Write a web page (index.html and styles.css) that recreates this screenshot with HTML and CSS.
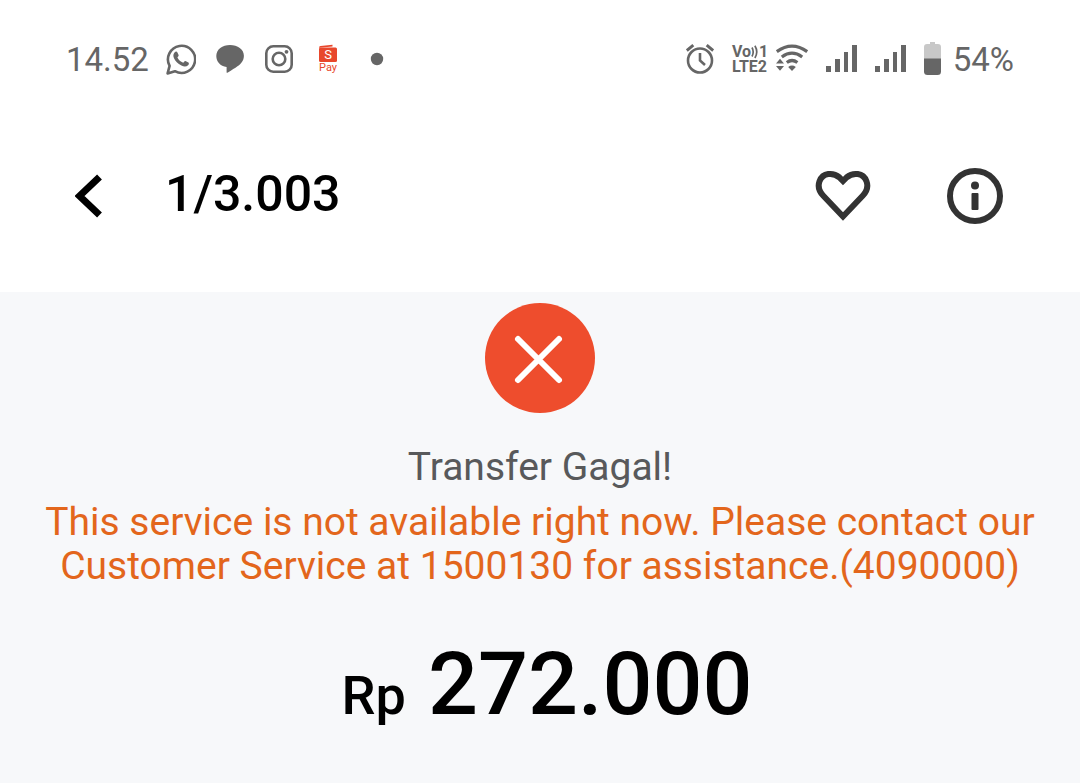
FILE: index.html
```html
<!DOCTYPE html>
<html lang="id">

<head>
    <meta charset="UTF-8">
    <meta name="viewport" content="width=device-width, initial-scale=1.0">
    <title>Transfer Gagal!</title>
    <link rel="stylesheet" href="styles.css">
</head>

<body>
    <div class="status-bar">
        <div class="status-left">
            <span class="time">14.52</span>
            <!-- WhatsApp -->
            <svg width="30" height="32" viewBox="0 0 30 32">
                <path d="M1.6 30.4L3.6 22.8A13.6 13.6 0 1 1 8.9 28.2Z" fill="none" stroke="#666" stroke-width="2.6" stroke-linejoin="round" />
                <path d="M8.7 9.2C9.6 8.2 10.8 8.2 11.3 9.2L12.6 12.1C12.9 12.9 12.1 13.8 11.4 14.5C12.7 17 14.5 18.7 17.2 19.8C18.1 18.8 18.8 17.7 19.5 18L22.4 19.4C23.3 20 22.8 21.5 22.1 22.2C20.4 23.8 18 23.8 15.4 22.6C11.8 21 9.2 18.2 7.9 15.1C6.9 12.6 7.4 10.6 8.7 9.2Z" fill="#666" />
            </svg>
            <!-- Chat -->
            <svg width="30" height="32" viewBox="0 0 30 32">
                <path d="M15 2C22.6 2 28.9 6.2 28.9 12.8C28.9 18.6 25 21.8 20.5 24.8C17.5 26.6 14.5 28.6 12.4 29.7C11.9 29.9 11.6 29.7 11.6 29.2V24C5.3 23.2 1.3 18.7 1.3 13C1.3 6.4 7.4 2 15 2Z" fill="#666" />
            </svg>
            <!-- Instagram -->
            <svg width="30" height="32" viewBox="0 0 30 32">
                <rect x="2.3" y="3.3" width="25.4" height="25.4" rx="7" fill="none" stroke="#666" stroke-width="2.6" />
                <circle cx="15" cy="16" r="6.3" fill="none" stroke="#666" stroke-width="2.6" />
                <circle cx="22.5" cy="8.8" r="1.9" fill="#666" />
            </svg>
            <!-- ShopeePay -->
            <svg width="30" height="32" viewBox="0 0 30 32">
                <path d="M6 4.6Q6 3.2 7.5 3L19.5 1.8V3.6L6 4.8Z" fill="#e8472c" />
                <rect x="6" y="4.6" width="18" height="14.4" rx="1.5" fill="#e8472c" />
                <text class="pay-s" x="15" y="16" text-anchor="middle">S</text>
                <text class="pay-text" x="15" y="28" text-anchor="middle">Pay</text>
            </svg>
            <svg width="30" height="32" viewBox="0 0 30 32">
                <circle cx="15" cy="16" r="6.2" fill="#666" />
            </svg>
        </div>

        <div class="status-right">
            <!-- Alarm -->
            <svg width="28" height="32" viewBox="1 0 28 32">
                <g fill="none" stroke="#666" stroke-width="2.6">
                    <circle cx="15" cy="17.5" r="12" />
                    <path d="M15 10V17.5L20 22" />
                    <path d="M1.8 7.5L8.3 2.2M28.2 7.5L21.7 2.2" stroke-width="3" />
                </g>
            </svg>
            <div class="network">
                <!-- VoLTE -->
                <svg width="38" height="32" viewBox="0 0 38 32">
                    <text class="volte" x="1" y="14">Vo</text>
                    <path d="M21 4.500Q23.400 9 21 13.500M23.900 2.800Q27.600 9 23.900 15" fill="none" stroke="#666" stroke-width="1.700" />
                    <text class="volte" x="28" y="14">1</text>
                    <text class="volte" x="1" y="29">LTE2</text>
                </svg>
                <!-- Wi-Fi -->
                <svg width="34" height="32" viewBox="0 0 34 32">
                    <g fill="none" stroke="#666" stroke-width="3.2">
                        <path d="M1.8 8.6Q17 -2.4 32.2 8.6" />
                        <path d="M6.8 14Q17 6.3 27.2 14" />
                        <path d="M11.8 19.5Q17 15.5 22.4 19.5" />
                    </g>
                    <path d="M13.2 24Q17 21.2 20.800 24L17 28Z" fill="#666" />
                    <path d="M1 20.500L5 15.800L9 20.500ZM1 23L5 27.700L9 23Z" fill="#666" />
                </svg>
            </div>
            <svg width="32" height="32" viewBox="0 0 32 32">
                <path d="M0 23H5V29H0ZM9 16H14V29H9ZM18 9H22V29H18ZM26 2H31V29H26Z" fill="#666" />
            </svg>
            <svg width="32" height="32" viewBox="0 0 32 32">
                <path d="M0 23H5V29H0ZM9 16H14V29H9ZM18 9H22V29H18ZM26 2H31V29H26Z" fill="#666" />
            </svg>
            <div class="battery">
                <svg width="17" height="34" viewBox="0 0 17 34">
                    <path d="M0 17V5Q0 2 3 2H6V0H11V2H14Q17 2 17 5V17Z" fill="#c8c8c8" />
                    <path d="M0 16.5H17V29.5Q17 33 13.5 33H3.5Q0 33 0 29.5Z" fill="#666" />
                </svg>
                <span>54%</span>
            </div>
        </div>
    </div>

    <header class="header">
        <button type="button" class="icon-button" aria-label="Kembali">
            <svg width="28" height="44" viewBox="0 0 28 44">
                <path d="M24.500 3L4.500 22L24.500 41" fill="none" stroke="#000" stroke-width="7" />
            </svg>
        </button>
        <h1>1/3.003</h1>
        <div class="actions">
            <button type="button" class="icon-button" aria-label="Favorit">
                <svg width="56" height="56" viewBox="0 0 56 56">
                    <path d="M28 48.5L8.3 27.8C4.3 23.6 2.7 18.2 4.5 13.2C7.8 4.6 18 4 24.4 9.400L28 13L31.600 9.400C38 4 48.2 4.6 51.5 13.2C53.3 18.2 51.7 23.6 47.7 27.8Z" fill="none" stroke="#333" stroke-width="6" />
                </svg>
            </button>
            <button type="button" class="icon-button" aria-label="Info">
                <svg width="56" height="56" viewBox="0 0 56 56">
                    <circle cx="28" cy="28" r="25" fill="none" stroke="#333" stroke-width="6" />
                    <circle cx="28" cy="17.5" r="4" fill="#333" />
                    <rect x="24.5" y="25" width="7" height="17" rx="1" fill="#333" />
                </svg>
            </button>
        </div>
    </header>

    <main class="result">
        <svg width="110" height="110" viewBox="0 0 110 110">
            <circle cx="55" cy="55" r="55" fill="#ee4d2d" />
            <path d="M33 36L74 77M74 36L33 77" fill="none" stroke="#fff" stroke-width="6" stroke-linecap="round" />
        </svg>
        <h2>Transfer Gagal!</h2>
        <p class="message">This service is not available right now. Please contact our Customer Service at 1500130 for assistance.(4090000)</p>
        <p class="amount"><span class="currency">Rp</span><span>272.000</span></p>
    </main>
</body>

</html>
```
FILE: styles.css
```css
body {
    font-family: Roboto, sans-serif;
    background-color: #f7f8fa;
    color: #000;
    margin: 0;
}

svg {
    display: block;
    flex-shrink: 0;
}

.status-bar {
    display: flex;
    justify-content: space-between;
    align-items: center;
    height: 82px;
    padding: 18px 66px 0;
    background: #fff;
    color: #666;
    font-size: 33px;
}

.status-left {
    display: flex;
    align-items: center;
    gap: 19px;
}

.time {
    margin-right: -2px;
}

.status-right {
    display: flex;
    align-items: center;
    gap: 17px;
}

.network {
    display: flex;
    gap: 6px;
}

.battery {
    display: flex;
    align-items: center;
    gap: 12px;
}

.volte {
    font-size: 16px;
    font-weight: 700;
    fill: #666;
}

.pay-s {
    font-size: 13px;
    fill: #fff;
}

.pay-text {
    font-size: 11px;
    fill: #e8472c;
}

.header {
    display: flex;
    align-items: center;
    height: 192px;
    padding: 0 77px 0 75px;
    background: #fff;
}

.header h1 {
    margin: 0 0 4px 62px;
    font-size: 50px;
    font-weight: 500;
}

.icon-button {
    padding: 0;
    border: none;
    background: none;
    cursor: pointer;
}

.actions {
    display: flex;
    gap: 76px;
    margin-left: auto;
}

.result {
    display: flex;
    flex-direction: column;
    align-items: center;
    padding: 11px 40px 40px;
    text-align: center;
}

.result h2 {
    margin: 32px 0 11px;
    color: #58595b;
    font-size: 39px;
    font-weight: 400;
    line-height: 44px;
}

.message {
    margin: 0;
    color: #e3661c;
    font-size: 39px;
    line-height: 44px;
}

.amount {
    display: flex;
    align-items: baseline;
    gap: 22px;
    margin: 44px 0 0;
    padding-left: 14px;
    font-size: 88px;
    font-weight: 500;
    line-height: 104px;
}

.currency {
    font-size: 54px;
}
```
